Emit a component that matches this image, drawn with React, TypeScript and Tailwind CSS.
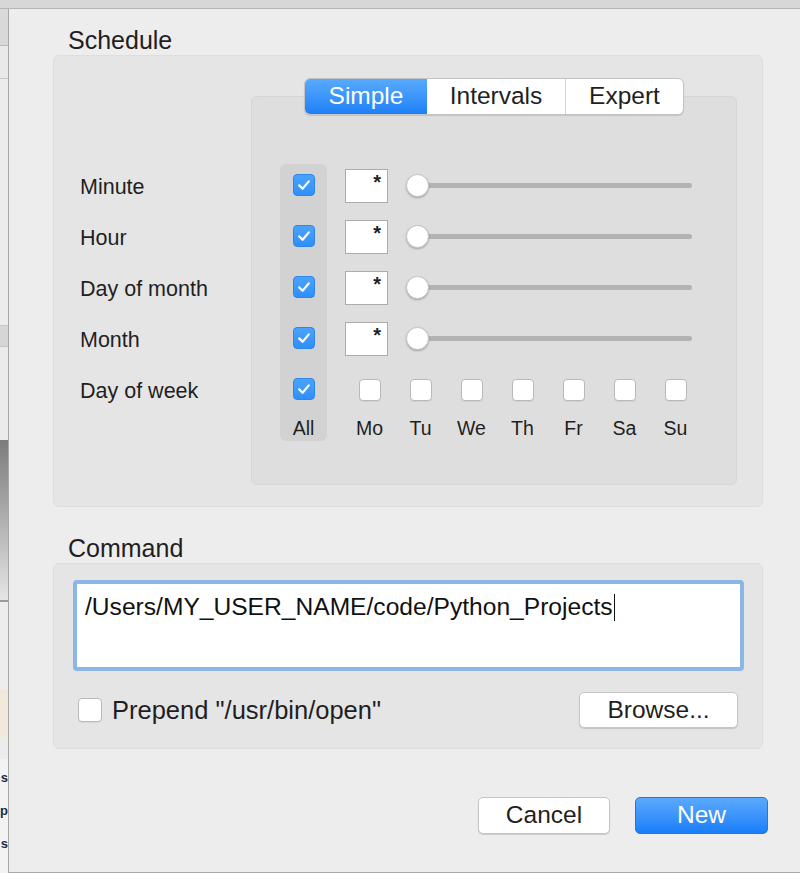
import React from "react";

const days = ["Mo", "Tu", "We", "Th", "Fr", "Sa", "Su"];
const rows = ["Minute", "Hour", "Day of month", "Month", "Day of week"];

const Check = ({ on, size = 22 }: { on: boolean; size?: number }) =>
  on ? (
    <div
      className="flex items-center justify-center rounded-[4px] bg-gradient-to-b from-[#4aa3fd] to-[#2f8ff9] border border-[#2b86ee]"
      style={{ width: size, height: size }}
    >
      <svg width="16" height="16" viewBox="0 0 16 16">
        <path d="M3.2 8.4 L6.6 11.8 L12.8 4.4" fill="none" stroke="white" strokeWidth="2.2" strokeLinecap="round" strokeLinejoin="round" />
      </svg>
    </div>
  ) : (
    <div
      className="rounded-[4px] bg-white border border-[#b9b9b9] shadow-[0_1px_0_rgba(0,0,0,0.06)]"
      style={{ width: size, height: size }}
    />
  );

const Slider = () => (
  <div className="relative w-[286px] h-[24px] flex items-center">
    <div className="absolute left-[10px] right-0 h-[5px] rounded-full bg-[#b3b3b3]" />
    <div className="relative w-[23px] h-[23px] rounded-full bg-white border border-[#c4c4c4] shadow-[0_1px_2px_rgba(0,0,0,0.25)]" />
  </div>
);

// bits of the window behind the dialog
const LeftStrip = () => (
  <div className="w-[8px] flex flex-col shrink-0 overflow-hidden">
    <div className="h-[36px] bg-[#d9d9d9]" />
    <div className="h-[1px] bg-[#b9b9b9]" />
    <div className="h-[32px] bg-[#e9e9e9]" />
    <div className="h-[1px] bg-[#c9c9c9]" />
    <div className="h-[246px] bg-[#ececec]" />
    <div className="h-[22px] bg-[#d6d6d6] border-y border-[#c6c6c6]" />
    <div className="h-[93px] bg-[#ebebeb]" />
    <div className="h-[160px] bg-gradient-to-b from-[#7c7c7c] to-[#e6e6e6]" />
    <div className="h-[2px] bg-[#9a9a9a]" />
    <div className="h-[87px] bg-[#ededed]" />
    <div className="h-[48px] bg-[#f1eadc]" />
    <div className="h-[22px] bg-[#ececec]" />
    <div className="flex-1 bg-[#f3f3f3] flex flex-col items-end pt-[2px] text-[13px] leading-[33px] font-bold text-[#1c2a44]">
      <span>s</span>
      <span>p</span>
      <span>s</span>
    </div>
  </div>
);

export default function App() {
  return (
    <div
      className="w-[800px] h-[873px] flex flex-col overflow-hidden bg-[#dcdcdc] text-[#1f1f1f]"
      style={{ fontFamily: '"Liberation Sans", Arial, sans-serif' }}
    >
      <div className="h-[9px] shrink-0 bg-[#d7d7d7] border-b border-[#b6b6b6]" />
      <div className="flex flex-1">
        <LeftStrip />
        <div className="flex-1 flex flex-col bg-[#ededed] border-l border-[#a8a8a8] border-b pl-[44px]">
          {/* Schedule */}
          <div className="mt-[18px] pl-[15px] text-[25px] leading-[26px]">Schedule</div>
          <div className="mt-[2px] w-[710px] h-[452px] flex rounded-[6px] bg-[#e5e5e5] border border-[#dedede]">
            <div className="w-[197px] pt-[106px] pl-[26px] flex flex-col">
              {rows.map((r) => (
                <div key={r} className="h-[51px] flex items-center text-[21.5px]">
                  {r}
                </div>
              ))}
            </div>
            <div className="w-[486px] flex flex-col">
              <div className="relative z-10 mt-[22px] self-center flex h-[37px] rounded-[6px] border border-[#c3c3c3] bg-white shadow-[0_1px_1px_rgba(0,0,0,0.12)] text-[24.5px] overflow-hidden">
                <div className="w-[122px] flex items-center justify-center text-white bg-gradient-to-b from-[#58aafd] to-[#1b80f6]">
                  Simple
                </div>
                <div className="w-[139px] flex items-center justify-center border-r border-[#d4d4d4]">Intervals</div>
                <div className="w-[117px] flex items-center justify-center">Expert</div>
              </div>
              <div className="-mt-[19px] h-[389px] flex items-start rounded-[6px] bg-[#dedede] border border-[#d6d6d6] pl-[28px]">
                <div className="mt-[67px] w-[47px] flex flex-col items-center pt-[10px] pb-[3px] rounded-[6px] bg-[#d2d2d2]">
                  <div className="flex flex-col gap-[29px]">
                    {rows.map((r) => (
                      <Check key={r} on />
                    ))}
                  </div>
                  <div className="mt-[18px] h-[20px] leading-[20px] text-[19.5px]">All</div>
                </div>
                <div className="mt-[63px] ml-[17px] flex flex-col">
                  {[0, 1, 2, 3].map((i) => (
                    <div key={i} className="h-[51px] flex items-center">
                      <div className="ml-[1px] w-[43px] h-[34px] bg-white border border-[#acacac] flex items-center justify-end pr-[6px] pb-[8px] text-[20px] font-bold leading-none">
                        *
                      </div>
                      <div className="ml-[18px]">
                        <Slider />
                      </div>
                    </div>
                  ))}
                  <div className="h-[51px] flex items-center">
                    {days.map((d) => (
                      <div key={d} className="w-[51px] flex justify-center">
                        <Check on={false} />
                      </div>
                    ))}
                  </div>
                  <div className="mt-[3px] h-[20px] flex">
                    {days.map((d) => (
                      <div key={d} className="w-[51px] text-center leading-[20px] text-[19.5px]">
                        {d}
                      </div>
                    ))}
                  </div>
                </div>
              </div>
            </div>
          </div>

          {/* Command */}
          <div className="mt-[28px] pl-[15px] text-[25px] leading-[26px]">Command</div>
          <div className="mt-[2px] w-[710px] h-[186px] flex flex-col rounded-[6px] bg-[#e5e5e5] border border-[#dedede]">
            <div className="mt-[16px] ml-[19px] w-[671px] h-[91px] rounded-[4px] border-[4px] border-[#8ab6ea] bg-white">
              <div className="pt-[9px] pl-[8px] text-[24.6px] leading-[28px] text-[#111] flex items-center">
                /Users/MY_USER_NAME/code/Python_Projects
                <span className="ml-[1px] inline-block w-[1.5px] h-[27px] bg-[#111]" />
              </div>
            </div>
            <div className="mt-[21px] h-[36px] flex items-center justify-between pl-[24px] pr-[24px]">
              <div className="flex items-center">
                <Check on={false} size={24} />
                <span className="ml-[10px] text-[25.5px]">Prepend "/usr/bin/open"</span>
              </div>
              <div className="w-[159px] h-[36px] flex items-center justify-center rounded-[5px] bg-white border border-[#c6c6c6] shadow-[0_1px_1px_rgba(0,0,0,0.15)] text-[24.5px]">
                Browse...
              </div>
            </div>
          </div>

          {/* Buttons */}
          <div className="mt-[48px] flex justify-end gap-[25px] pr-[32px]">
            <div className="w-[132px] h-[37px] flex items-center justify-center rounded-[5px] bg-white border border-[#c6c6c6] shadow-[0_1px_1px_rgba(0,0,0,0.15)] text-[24.5px]">
              Cancel
            </div>
            <div className="w-[133px] h-[37px] flex items-center justify-center rounded-[5px] bg-gradient-to-b from-[#5aa9fd] to-[#167ef8] border border-[#1a78e8] text-white text-[24.5px]">
              New
            </div>
          </div>
        </div>
      </div>
    </div>
  );
}
